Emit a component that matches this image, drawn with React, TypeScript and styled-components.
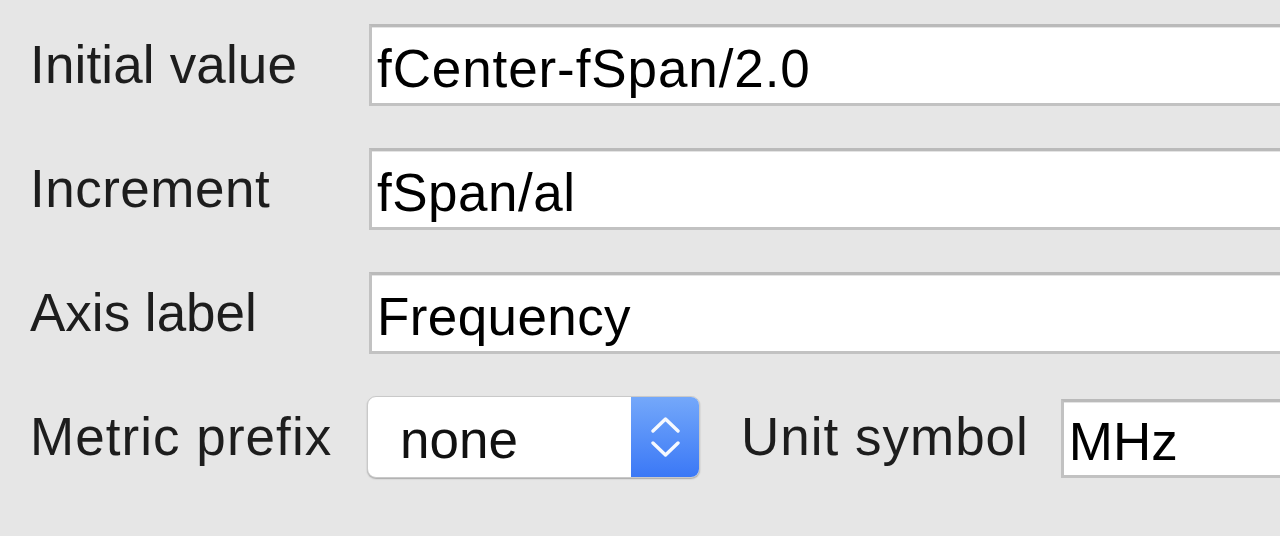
import React from "react";
import styled, { createGlobalStyle } from "styled-components";

const GlobalStyle = createGlobalStyle`
  html, body {
    margin: 0;
    padding: 0;
    background: #e6e6e6;
    overflow: hidden;
  }
  body {
    font-family: "Liberation Sans", Arial, Helvetica, sans-serif;
  }
`;

const Form = styled.div`
  width: 1400px;
  height: 536px;
  box-sizing: border-box;
  padding: 24px 0 0 30px;
  display: flex;
  flex-direction: column;
  gap: 42px;
`;

const Row = styled.div`
  display: flex;
  align-items: center;
  height: 82px;
`;

const Label = styled.label<{ $width?: number; $spacing?: number }>`
  flex: none;
  width: ${(p) => (p.$width ? `${p.$width}px` : "auto")};
  font-size: 53px;
  line-height: 61px;
  letter-spacing: ${(p) => p.$spacing ?? 0}px;
  color: #1d1d1d;
  margin-top: -1px;
  white-space: nowrap;
`;

const TextField = styled.input<{ $width?: number; $height?: number; $spacing?: number }>`
  flex: ${(p) => (p.$width ? "none" : "1")};
  width: ${(p) => (p.$width ? `${p.$width}px` : "auto")};
  height: ${(p) => p.$height ?? 82}px;
  box-sizing: border-box;
  margin: 0;
  border: 3px solid #c2c2c2;
  border-top-color: #bababa;
  background: #ffffff;
  padding: 6px 0 0 5px;
  font-family: "Liberation Sans", Arial, Helvetica, sans-serif;
  font-size: 53px;
  letter-spacing: ${(p) => p.$spacing ?? 0}px;
  color: #000000;
  outline: none;
  box-shadow: inset 0 1px 0 #e4e4e4;
`;

const PopUp = styled.button`
  flex: none;
  display: flex;
  align-items: stretch;
  width: 333px;
  height: 82px;
  margin: 0 41px 0 -2px;
  padding: 0;
  border: 1px solid #c9c9c9;
  border-radius: 9px;
  background: #ffffff;
  box-shadow: 0 1px 1.5px rgba(0, 0, 0, 0.28);
  overflow: hidden;
  cursor: default;
`;

const PopUpValue = styled.span`
  flex: 1;
  display: flex;
  align-items: center;
  padding: 4px 0 0 32px;
  font-family: "Liberation Sans", Arial, Helvetica, sans-serif;
  font-size: 53px;
  color: #111111;
  text-align: left;
`;

const Stepper = styled.span`
  flex: none;
  width: 68px;
  display: flex;
  align-items: center;
  justify-content: center;
  background: linear-gradient(to bottom, #74a8fa 0%, #5790f8 50%, #3b78f6 100%);
`;

const UnitField = styled(TextField)`
  margin-left: 32px;
  margin-top: 2px;
`;

const Chevrons = () => (
  <svg width="68" height="82" viewBox="0 0 68 82" aria-hidden="true">
    <g fill="none" stroke="#ffffff" strokeWidth="3.4" strokeLinecap="round" strokeLinejoin="round" opacity="0.95">
      <polyline points="22,35 34.5,23 47,35" />
      <polyline points="22,47 34.5,59 47,47" />
    </g>
  </svg>
);

export default function App() {
  return (
    <>
      <GlobalStyle />
      <Form>
        <Row>
          <Label $width={339} $spacing={0.15}>Initial value</Label>
          <TextField readOnly $spacing={0.9} defaultValue="fCenter-fSpan/2.0" />
        </Row>
        <Row>
          <Label $width={339} $spacing={0.5}>Increment</Label>
          <TextField readOnly $spacing={0.5} defaultValue="fSpan/al" />
        </Row>
        <Row>
          <Label $width={339}>Axis label</Label>
          <TextField readOnly $spacing={0.4} defaultValue="Frequency" />
        </Row>
        <Row>
          <Label $width={339} $spacing={1.05}>Metric prefix</Label>
          <PopUp type="button">
            <PopUpValue>none</PopUpValue>
            <Stepper>
              <Chevrons />
            </Stepper>
          </PopUp>
          <Label $spacing={1}>Unit symbol</Label>
          <UnitField readOnly $width={300} $height={79} defaultValue="MHz" />
        </Row>
      </Form>
    </>
  );
}
